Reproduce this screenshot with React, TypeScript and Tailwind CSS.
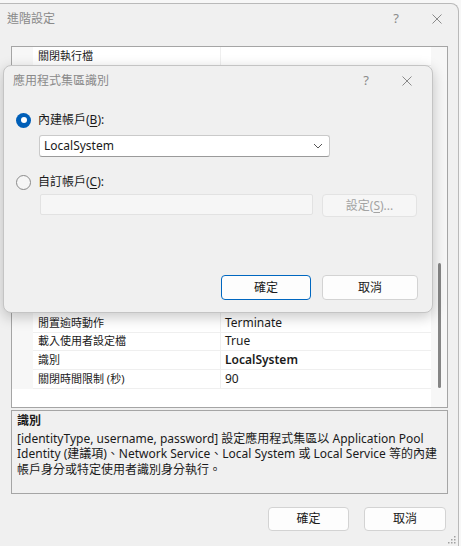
import React from "react";

const FONT = "font-['Noto_Sans','Noto_Sans_CJK_TC',sans-serif]";

type Row = { name: string; value: string; bold?: boolean };

const VISIBLE_ROWS: Row[] = [
  { name: "閒置逾時動作", value: "Terminate" },
  { name: "載入使用者設定檔", value: "True" },
  { name: "識別", value: "LocalSystem", bold: true },
  { name: "關閉時間限制 (秒)", value: "90" },
];

// rows covered by the identity dialog, drawn empty
const HIDDEN_ROW_COUNT = 14;

function CloseIcon({ className }: { className?: string }) {
  return (
    <svg viewBox="0 0 10 10" className={className} fill="none" stroke="currentColor" strokeWidth="1">
      <path d="M0.5 0.5 L9.5 9.5 M9.5 0.5 L0.5 9.5" />
    </svg>
  );
}

function GridRow({ row }: { row: Row }) {
  return (
    <div className="flex h-[18.67px] shrink-0 items-center text-[12px] text-[#1a1a1a]">
      <div className="h-full w-[21px] shrink-0 bg-[#f7f7f7]" />
      <div className="flex h-full w-[188px] shrink-0 items-center border-b border-r border-[#efefef] bg-white pl-[5px]">
        <span className="whitespace-nowrap text-[11px]">{row.name}</span>
      </div>
      <div className={`flex h-full flex-1 items-center border-b border-[#efefef] bg-white pl-[4px] ${row.bold ? "font-semibold" : ""}`}>
        {row.value}
      </div>
    </div>
  );
}

function Btn({ children, primary, disabled, className }: { children: React.ReactNode; primary?: boolean; disabled?: boolean; className?: string }) {
  return (
    <div
      className={`flex items-center justify-center rounded-[4px] border text-[12px] ${
        disabled
          ? "border-[#e3e3e3] bg-[#f6f6f6] text-[#a3a3a3]"
          : primary
          ? "border-[#0067c0] bg-[#fdfdfd] text-[#1a1a1a]"
          : "border-[#d3d3d3] bg-[#fdfdfd] text-[#1a1a1a]"
      } ${className ?? ""}`}
    >
      {children}
    </div>
  );
}

function IdentityDialog() {
  return (
    <div className="absolute left-[3px] top-[65px] flex h-[248px] w-[430px] flex-col rounded-[8px] border border-[#c4c4c4] bg-[#f0f0f0] shadow-[0_4px_14px_rgba(0,0,0,0.22)]">
      <div className="flex h-[30px] items-center pl-[9px] text-[12px] text-[#8a8a8a]">
        <span className="flex-1">應用程式集區識別</span>
        <span className="w-[20px] text-center text-[13px]">?</span>
        <CloseIcon className="ml-[26px] mr-[20px] h-[10px] w-[10px] text-[#8a8a8a]" />
      </div>

      <div className="mt-[15px] flex items-center pl-[12px] text-[12px] text-[#1a1a1a]">
        <span className="flex h-[15px] w-[15px] items-center justify-center rounded-full bg-[#005fb8]">
          <span className="h-[6px] w-[6px] rounded-full bg-white" />
        </span>
        <span className="ml-[7px] underline-offset-2 [text-decoration-skip-ink:none]">
          內建帳戶(<u>B</u>):
        </span>
      </div>

      <div className="ml-[35px] mt-[6px] flex h-[22px] w-[291px] items-center rounded-[3px] border border-[#cacaca] border-b-[#9a9a9a] bg-white pl-[4px] pr-[6px] text-[12px] text-[#1a1a1a]">
        <span className="flex-1">LocalSystem</span>
        <svg viewBox="0 0 10 6" className="h-[6px] w-[10px]" fill="none" stroke="#555" strokeWidth="1">
          <path d="M1 1 L5 5 L9 1" />
        </svg>
      </div>

      <div className="mt-[16px] flex items-center pl-[12px] text-[12px] text-[#1a1a1a]">
        <span className="h-[15px] w-[15px] rounded-full border border-[#8a8a8a] bg-[#f6f6f6]" />
        <span className="ml-[7px] underline-offset-2">
          自訂帳戶(<u>C</u>):
        </span>
      </div>

      <div className="ml-[36px] mt-[3px] flex items-start">
        <div className="h-[21px] w-[273px] rounded-[2px] border border-[#e2e2e2] bg-[#f6f6f6]" />
        <Btn disabled className="ml-[9px] h-[23px] w-[95px] underline-offset-2">
          設定(<u>S</u>)...
        </Btn>
      </div>

      <div className="flex-1" />
      <div className="mb-[12px] flex justify-end pr-[14px]">
        <Btn primary className="h-[25px] w-[90px]">
          確定
        </Btn>
        <Btn className="ml-[11px] h-[25px] w-[96px]">取消</Btn>
      </div>
    </div>
  );
}

export default function App() {
  return (
    <div className={`relative h-[546px] w-[461px] overflow-hidden bg-[#f7f7f7] ${FONT}`}>
      <div className="mt-[3px] flex h-[543px] w-[459px] flex-col rounded-tr-[8px] border-r border-t border-[#b9b9b9] bg-[#f0f0f0]">
        <div className="flex h-[30px] items-center pl-[7px] text-[12px] text-[#8a8a8a]">
          <span className="flex-1">進階設定</span>
          <span className="w-[20px] text-center text-[13px]">?</span>
          <CloseIcon className="ml-[26px] mr-[16px] h-[10px] w-[10px] text-[#8a8a8a]" />
        </div>

        <div className="ml-[11px] mt-[12px] flex h-[362px] w-[437px] border border-[#a5a5a5] bg-white">
          <div className="flex flex-1 flex-col">
            <GridRow row={{ name: "關閉執行檔", value: "" }} />
            <div className="flex h-[248.33px] flex-col overflow-hidden">
              {Array.from({ length: HIDDEN_ROW_COUNT }, (_, i) => (
                <GridRow key={i} row={{ name: "", value: "" }} />
              ))}
            </div>
            {VISIBLE_ROWS.map((r) => (
              <GridRow key={r.name} row={r} />
            ))}
          </div>
          <div className="flex w-[16px] justify-center bg-[#f7f7f7] pt-[216px]">
            <div className="h-[125px] w-[3px] rounded-full bg-[#858585]" />
          </div>
        </div>

        <div className="ml-[11px] mt-[2px] h-[84px] w-[437px] border border-[#a5a5a5] bg-[#f0f0f0] px-[5px] pt-[2px] text-[12px] leading-[15.5px] text-[#1a1a1a]">
          <div className="font-semibold">識別</div>
          <div className="mt-[2px] whitespace-nowrap">[identityType, username, password] 設定應用程式集區以 Application Pool</div>
          <div className="whitespace-nowrap">Identity (建議項)、Network Service、Local System 或 Local Service 等的內建</div>
          <div className="whitespace-nowrap">帳戶身分或特定使用者識別身分執行。</div>
        </div>

        <div className="mt-[13px] flex justify-end pr-[12px]">
          <Btn className="h-[24px] w-[81px]">確定</Btn>
          <Btn className="ml-[15px] h-[24px] w-[82px]">取消</Btn>
        </div>

        <div className="mt-auto mb-[2px] mr-[2px] flex justify-end">
          <svg viewBox="0 0 8 8" className="h-[8px] w-[8px]" fill="#a0a0a0">
            <rect x="6" y="0" width="1.5" height="1.5" />
            <rect x="3" y="3" width="1.5" height="1.5" />
            <rect x="6" y="3" width="1.5" height="1.5" />
            <rect x="0" y="6" width="1.5" height="1.5" />
            <rect x="3" y="6" width="1.5" height="1.5" />
            <rect x="6" y="6" width="1.5" height="1.5" />
          </svg>
        </div>
      </div>

      <IdentityDialog />
    </div>
  );
}
